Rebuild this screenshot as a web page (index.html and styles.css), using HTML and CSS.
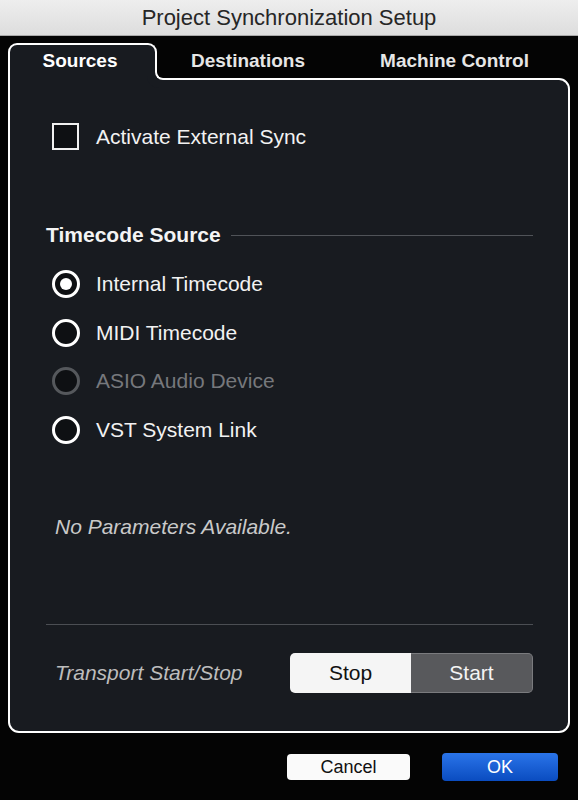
FILE: index.html
```html
<!DOCTYPE html>
<html>
<head>
<meta charset="utf-8">
<link rel="stylesheet" href="styles.css">
</head>
<body>
<div class="window">
  <div class="titlebar">Project Synchronization Setup</div>
  <div class="main">
    <div class="tabs">
      <div class="tab active">Sources</div>
      <div class="tab dest">Destinations</div>
      <div class="tab mc">Machine Control</div>
    </div>
    <div class="panel">
      <div class="check-row">
        <span class="checkbox"></span>
        <span class="label">Activate External Sync</span>
      </div>
      <div class="section-head"><span>Timecode Source</span></div>
      <div class="radios">
        <div class="radio-row"><span class="radio on"></span><span class="label">Internal Timecode</span></div>
        <div class="radio-row"><span class="radio"></span><span class="label">MIDI Timecode</span></div>
        <div class="radio-row disabled"><span class="radio"></span><span class="label">ASIO Audio Device</span></div>
        <div class="radio-row"><span class="radio"></span><span class="label">VST System Link</span></div>
      </div>
      <div class="note">No Parameters Available.</div>
      <div class="separator"></div>
      <div class="transport">
        <span class="transport-label">Transport Start/Stop</span>
        <div class="segment">
          <span class="seg stop">Stop</span>
          <span class="seg start">Start</span>
        </div>
      </div>
    </div>
    <div class="footer">
      <div class="btn cancel">Cancel</div>
      <div class="btn ok">OK</div>
    </div>
  </div>
</div>
</body>
</html>
```
FILE: styles.css
```css
body {
  margin: 0;
  background: #040404;
  font-family: "Liberation Sans", Arial, sans-serif;
  width: 578px;
  height: 800px;
  overflow: hidden;
}

.titlebar {
  height: 35px;
  border-bottom: 1px solid #a9a9a9;
  background: linear-gradient(#eeeeee, #dddddd);
  color: #262626;
  font-size: 22px;
  line-height: 36px;
  text-align: center;
}

.main {
  padding: 7px 8px 0;
}

.tabs {
  display: flex;
  align-items: flex-start;
  height: 35px;
  position: relative;
  z-index: 2;
}

.tab {
  height: 35px;
  font-weight: bold;
  font-size: 19px;
  color: #e6e6e6;
  display: flex;
  align-items: center;
  justify-content: center;
  box-sizing: border-box;
}

.tab.active {
  width: 149px;
  height: 37px;
  border: 2px solid #ffffff;
  border-bottom: 0;
  border-radius: 9px 9px 0 0;
  background: #181b20;
  color: #ffffff;
  padding: 0 5px 4px 0;
  position: relative;
}

.tab.active::after {
  content: "";
  position: absolute;
  left: 100%;
  bottom: 0;
  width: 10px;
  height: 10px;
  border-left: 2px solid #ffffff;
  border-bottom: 2px solid #ffffff;
  border-bottom-left-radius: 8px;
  background: #040404;
  box-shadow: -4px 4px 0 4px #181b20;
}

.tab.dest {
  width: 182px;
}

.tab.mc {
  flex: 1;
}

.panel {
  height: 655px;
  box-sizing: border-box;
  border: 2px solid #ffffff;
  border-radius: 0 11px 11px 11px;
  background: #181b20;
  padding: 0 35px 0 36px;
  color: #f2f2f2;
  font-size: 21px;
}

.check-row {
  margin-top: 43px;
  margin-left: 6px;
  display: flex;
  align-items: center;
  height: 27px;
}

.checkbox {
  width: 27px;
  height: 27px;
  box-sizing: border-box;
  border: 2px solid #f0f0f0;
  background: #0e1013;
}

.check-row .label {
  margin-left: 17px;
  line-height: 27px;
}

.section-head {
  margin-top: 73px;
  display: flex;
  align-items: center;
  height: 24px;
  font-weight: bold;
  color: #f4f4f4;
}

.section-head::after {
  content: "";
  flex: 1;
  height: 1px;
  background: #505358;
  margin-left: 10px;
}

.radios {
  margin-top: 23px;
  margin-left: 6px;
  display: flex;
  flex-direction: column;
  gap: 20.67px;
}

.radio-row {
  display: flex;
  align-items: center;
  height: 28px;
}

.radio {
  width: 28px;
  height: 28px;
  box-sizing: border-box;
  border: 3px solid #ffffff;
  border-radius: 50%;
  background: #0e1013;
  display: flex;
  align-items: center;
  justify-content: center;
}

.radio.on::after {
  content: "";
  width: 12px;
  height: 12px;
  border-radius: 50%;
  background: #ffffff;
}

.radio-row .label {
  margin-left: 16px;
}

.radio-row.disabled .radio {
  border-color: #55585c;
}

.radio-row.disabled .label {
  color: #76787c;
}

.note {
  margin-top: 71px;
  margin-left: 9px;
  line-height: 24px;
  font-style: italic;
  color: #c9c9c9;
}

.separator {
  height: 1px;
  background: #4b4e53;
  margin-top: 85px;
}

.transport {
  margin-top: 28px;
  display: flex;
  align-items: center;
  justify-content: space-between;
  height: 40px;
}

.transport-label {
  margin-left: 9px;
  font-style: italic;
  color: #bdbdbd;
}

.segment {
  display: flex;
  width: 243px;
  height: 40px;
}

.seg {
  flex: 1;
  display: flex;
  align-items: center;
  justify-content: center;
  box-sizing: border-box;
}

.seg.stop {
  background: #f5f5f5;
  color: #111111;
  border-radius: 5px 0 0 5px;
}

.seg.start {
  background: #58595c;
  color: #f4f4f4;
  border: 1px solid #7a7b7e;
  border-left: 0;
  border-radius: 0 5px 5px 0;
}

.footer {
  display: flex;
  justify-content: flex-end;
  align-items: center;
  gap: 32px;
  padding: 20px 12px 0 0;
}

.btn {
  display: flex;
  align-items: center;
  justify-content: center;
  border-radius: 4px;
  font-size: 18px;
}

.cancel {
  width: 123px;
  height: 26px;
  background: #fafafa;
  color: #111111;
}

.ok {
  width: 116px;
  height: 28px;
  background: linear-gradient(#2a74e9, #0a4cc0);
  color: #ffffff;
}
```
